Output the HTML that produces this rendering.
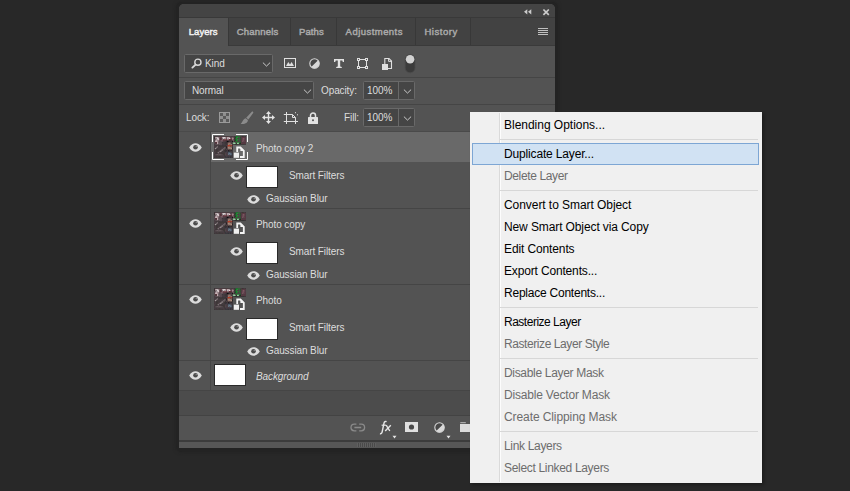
<!DOCTYPE html>
<html>
<head>
<meta charset="utf-8">
<title>Layers</title>
<style>
*{box-sizing:border-box;margin:0;padding:0}
html,body{width:850px;height:491px;overflow:hidden;background:#282828}
body{position:relative;font-family:"Liberation Sans",sans-serif;font-size:10px;color:#dddddd}
.abs{position:absolute}
#shadow{left:176px;top:2px;width:382px;height:450px;border-radius:6px;background:#232323;box-shadow:0 0 3px 1px #242424}
#panel{left:179px;top:4px;width:376px;height:444px;background:#535353;border-radius:5px 5px 0 0;overflow:hidden}
#titlebar{left:0;top:0;width:376px;height:13px;background:#444444}
#tabbar{left:0;top:13px;width:376px;height:29px;background:#424242;border-top:1px solid #393939;border-bottom:1px solid #3a3a3a}
.tab span{position:absolute;top:0;white-space:nowrap}
.tab{top:0;height:27px;line-height:28px;text-align:left;font-weight:normal;-webkit-text-stroke:0.45px currentColor;font-size:9.5px;color:#aaaaaa;border-right:1px solid #383838;letter-spacing:-0.2px}
.tab.active{background:#535353;color:#f2f2f2;height:28px}
.hline{left:179px;width:376px;height:1px;background:#454545}
.dd{background:#454545;border:1px solid #696969;border-radius:1.5px}
.t{white-space:nowrap;line-height:14px;height:14px;letter-spacing:-0.1px;margin-top:1px}
.mask{background:#fff;border:1px solid #2a2a2a}
#menu{left:470px;top:112px;width:292px;height:371px;box-shadow:2px 2px 3px rgba(0,0,0,0.28);background:#f0f0f0;color:#000;font-size:12px;letter-spacing:-0.1px}
#menu .gut{left:29px;top:1px;width:2px;height:369px;background:#dadada;border-right:1px solid #fdfdfd}
#menu .mi{left:34px;height:22px;line-height:22px;white-space:nowrap}
#menu .dis{color:#6d6d6d}
#menu .ms{left:30px;width:258px;height:1px;background:#d7d7d7}
#menu .hl{left:2px;top:31px;width:287px;height:22px;background:#d1e2f3;border:1px solid #7da6d4}
</style>
</head>
<body>
<div id="shadow" class="abs"></div>
<div id="panel" class="abs">
  <div id="titlebar" class="abs"></div>
  <div id="tabbar" class="abs">
    <div class="abs tab active" style="left:0;width:50px"><span style="left:9.8px;letter-spacing:0.03px">Layers</span></div>
    <div class="abs tab" style="left:50px;width:62px"><span style="left:7.8px;letter-spacing:0.2px">Channels</span></div>
    <div class="abs tab" style="left:112px;width:46px"><span style="left:8.1px;letter-spacing:0.08px">Paths</span></div>
    <div class="abs tab" style="left:158px;width:79px"><span style="left:8.6px;letter-spacing:0.46px">Adjustments</span></div>
    <div class="abs tab" style="left:237px;width:55px"><span style="left:8.4px;letter-spacing:0.55px">History</span></div>
  </div>
</div>

<svg class="abs" style="left:523px;top:8px" width="10" height="8" viewBox="0 0 10 8"><path d="M4.3 1.2 V6.4 L1 3.8 Z M8.3 1.2 V6.4 L5 3.8 Z" fill="#cccccc"/></svg>
<svg class="abs" style="left:542px;top:8px" width="8" height="8" viewBox="0 0 8 8"><path d="M1.4 1.5 L6.8 6.9 M6.8 1.5 L1.4 6.9" stroke="#cccccc" stroke-width="1.7"/></svg>
<svg class="abs" style="left:537px;top:27px" width="12" height="9" viewBox="0 0 12 9"><path d="M1 1.5 H11 M1 3.5 H11 M1 5.5 H11 M1 7.5 H11" stroke="#c0c0c0" stroke-width="1" shape-rendering="crispEdges"/></svg>

<div class="abs dd" style="left:184px;top:54px;width:89px;height:19px"></div>
<svg class="abs" style="left:191px;top:58px" width="12" height="11" viewBox="0 0 12 11"><circle cx="6.9" cy="4.2" r="3.1" fill="none" stroke="#d8d8d8" stroke-width="1.4"/><path d="M4.6 6.6 L1.4 9.6" stroke="#d8d8d8" stroke-width="1.9" stroke-linecap="round"/></svg>
<div class="abs t" style="left:205px;top:56px">Kind</div>
<svg class="abs" style="left:262px;top:61.5px" width="9" height="6" viewBox="0 0 9 6"><path d="M0.9 0.6 L4.5 4.1 L8.1 0.6" fill="none" stroke="#cacaca" stroke-width="1"/></svg>

<svg class="abs" style="left:284px;top:58px" width="12" height="10" viewBox="0 0 12 10"><rect x="0.5" y="0.5" width="11" height="9" fill="none" stroke="#e0e0e0" stroke-width="1"/><path d="M2 8 L4.3 4 L6 6.5 L7.6 4 L10 8 Z" fill="#e0e0e0"/></svg>
<svg class="abs" style="left:309px;top:57.5px" width="11" height="11" viewBox="0 0 11 11"><circle cx="5.5" cy="5.5" r="4.7" fill="#484848" stroke="#d8d8d8" stroke-width="1.1"/><path d="M9.1 2.2 A4.9 4.9 0 0 1 2.2 9.1 Z" fill="#d8d8d8"/></svg>
<svg class="abs" style="left:333px;top:58px" width="12" height="11" viewBox="0 0 12 11"><path d="M1 1 H11 V4 H9.8 L9.3 2.4 H7.2 V8.6 L8.8 9 V10 H3.2 V9 L4.8 8.6 V2.4 H2.7 L2.2 4 H1 Z" fill="#e2e2e2"/></svg>
<svg class="abs" style="left:357px;top:58px" width="12" height="12" viewBox="0 0 12 12"><rect x="1.5" y="1.5" width="8" height="8" fill="none" stroke="#e0e0e0" stroke-width="1"/><g fill="#535353" stroke="#e0e0e0" stroke-width="1"><rect x="0.5" y="0.5" width="2" height="2"/><rect x="8.5" y="0.5" width="2" height="2"/><rect x="0.5" y="8.5" width="2" height="2"/><rect x="8.5" y="8.5" width="2" height="2"/></g></svg>
<svg class="abs" style="left:381px;top:57px" width="12" height="14" viewBox="0 0 12 14"><path d="M3.8 7 V1.5 H8 L10.5 4 V11.5 H7" fill="none" stroke="#e0e0e0" stroke-width="1.1"/><path d="M7.6 1.5 V4.4 H10.5" fill="none" stroke="#e0e0e0" stroke-width="1"/><rect x="1" y="7" width="6" height="6" fill="#e0e0e0"/></svg>
<svg class="abs" style="left:404px;top:53px" width="12" height="21" viewBox="0 0 12 21"><rect x="1.2" y="1.4" width="9.8" height="18.4" rx="4.9" fill="#3b3b3b" stroke="#4b4b4b" stroke-width="0.8"/><circle cx="6.1" cy="6.2" r="4.3" fill="#d2d2d2"/></svg>

<div class="abs hline" style="top:77px"></div>
<div class="abs dd" style="left:184px;top:81px;width:130px;height:19px"></div>
<div class="abs t" style="left:192px;top:83px">Normal</div>
<svg class="abs" style="left:303px;top:88.5px" width="9" height="6" viewBox="0 0 9 6"><path d="M0.9 0.6 L4.5 4.1 L8.1 0.6" fill="none" stroke="#cacaca" stroke-width="1"/></svg>
<div class="abs t" style="left:321px;top:83px">Opacity:</div>
<div class="abs dd" style="left:363px;top:81px;width:52px;height:19px"></div>
<div class="abs" style="left:398px;top:82px;width:1px;height:17px;background:#686868"></div>
<div class="abs t" style="left:367px;top:83px">100%</div>
<svg class="abs" style="left:402.5px;top:88.5px" width="9" height="6" viewBox="0 0 9 6"><path d="M0.9 0.6 L4.5 4.1 L8.1 0.6" fill="none" stroke="#cacaca" stroke-width="1"/></svg>

<div class="abs hline" style="top:104px"></div>
<div class="abs t" style="left:186px;top:110px">Lock:</div>
<svg class="abs" style="left:219px;top:112px" width="11" height="11" viewBox="0 0 11 11"><rect x="0.5" y="0.5" width="10" height="10" fill="#8f8f8f" stroke="#9a9a9a"/><g fill="#5a5a5a"><rect x="1" y="1" width="3" height="3"/><rect x="7" y="1" width="3" height="3"/><rect x="4" y="4" width="3" height="3"/><rect x="1" y="7" width="3" height="3"/><rect x="7" y="7" width="3" height="3"/></g></svg>
<svg class="abs" style="left:240px;top:111px" width="14" height="14" viewBox="0 0 14 14"><path d="M12 0.6 C12.9 0.4 13.6 1.2 13.2 2 L8.4 8.6 L6.2 6.8 Z" fill="#8b8b8b"/><path d="M5.7 7.3 L7.9 9.1 C8 12 4.6 13.6 0.6 12.9 C2.8 11.6 2.2 8.6 5.7 7.3 Z" fill="#8b8b8b"/></svg>
<svg class="abs" style="left:262px;top:111px" width="13" height="13" viewBox="0 0 13 13"><path d="M6.5 0 L9 3 H7.2 V5.8 H10 V4 L13 6.5 L10 9 V7.2 H7.2 V10 H9 L6.5 13 L4 10 H5.8 V7.2 H3 V9 L0 6.5 L3 4 V5.8 H5.8 V3 H4 Z" fill="#e4e4e4"/></svg>
<svg class="abs" style="left:283px;top:111px" width="16" height="14" viewBox="0 0 16 14"><path d="M3.5 1 V13 M0.8 3.5 H9.5 L12.5 6.5 V13 M0.8 10.5 H15 M9.5 3.5 V6.5 H12.5" fill="none" stroke="#e0e0e0" stroke-width="1"/><rect x="12" y="1.2" width="1" height="1" fill="#e0e0e0"/><rect x="14" y="3.3" width="1" height="1" fill="#e0e0e0"/></svg>
<svg class="abs" style="left:308px;top:112px" width="10" height="12" viewBox="0 0 10 12"><path d="M2.5 5 V3.5 A2.5 2.5 0 0 1 7.5 3.5 V5" fill="none" stroke="#e2e2e2" stroke-width="1.5"/><rect x="0" y="5" width="10" height="7" rx="0.5" fill="#e2e2e2"/><circle cx="5" cy="8.3" r="1" fill="#535353"/></svg>
<div class="abs t" style="left:344px;top:110px">Fill:</div>
<div class="abs dd" style="left:363px;top:108px;width:52px;height:19px"></div>
<div class="abs" style="left:398px;top:109px;width:1px;height:17px;background:#686868"></div>
<div class="abs t" style="left:367px;top:110px">100%</div>
<svg class="abs" style="left:402.5px;top:115.5px" width="9" height="6" viewBox="0 0 9 6"><path d="M0.9 0.6 L4.5 4.1 L8.1 0.6" fill="none" stroke="#cacaca" stroke-width="1"/></svg>

<div class="abs hline" style="top:131px;background:#4a4a4a"></div>
<div class="abs" style="left:211px;top:132px;width:344px;height:30px;background:#696969"></div>
<div class="abs" style="left:179px;top:391px;width:376px;height:24px;background:#4c4c4c"></div>
<div class="abs" style="left:210px;top:132px;width:1px;height:259px;background:#464646"></div>
<div class="abs hline" style="top:208px"></div>
<div class="abs hline" style="top:284px"></div>
<div class="abs hline" style="top:360px"></div>
<div class="abs hline" style="top:390px"></div>
<svg class="abs" style="left:189.0px;top:143.0px" width="13" height="9" viewBox="0 0 13 9"><path d="M0.2 4.5 C2 1.4 4.2 0.3 6.5 0.3 C8.8 0.3 11 1.4 12.8 4.5 C11 7.6 8.8 8.7 6.5 8.7 C4.2 8.7 2 7.6 0.2 4.5 Z" fill="#dcdcdc"/><circle cx="6.5" cy="4.3" r="2.3" fill="#4a4a4a"/><circle cx="7.3" cy="3.5" r="0.8" fill="#858585"/></svg>
<svg class="abs" style="left:214px;top:136px" width="32" height="22" viewBox="0 0 32 22">
<defs><filter id="b0" x="-10%" y="-10%" width="120%" height="120%"><feGaussianBlur in="SourceGraphic" stdDeviation="0.7" result="bl"/><feTurbulence type="fractalNoise" baseFrequency="0.42" numOctaves="2" seed="7" result="n"/><feColorMatrix in="n" type="matrix" values="0 0 0 0 0.07  0 0 0 0 0.05  0 0 0 0 0.06  2.4 0 0 0 -0.75" result="na"/><feComposite in="na" in2="bl" operator="in" result="dk"/><feMerge><feMergeNode in="bl"/><feMergeNode in="dk"/></feMerge></filter><clipPath id="c0"><rect width="32" height="22"/></clipPath><clipPath id="d0"><path d="M0 0 H32 V8.4 H18.6 V22 H0 Z"/></clipPath></defs>
<g clip-path="url(#d0)">
<rect width="32" height="22" fill="#2a2325"/>
<g filter="url(#b0)" clip-path="url(#c0)">
<rect x="0" y="0" width="32" height="22" fill="#2e292a"/>
<rect x="1" y="0.6" width="19" height="5" fill="#7c5c63"/>
<rect x="1.5" y="1" width="3.6" height="3" fill="#f0e2e5"/>
<rect x="6" y="1.6" width="1.6" height="2.4" fill="#5a2028"/>
<rect x="8" y="1" width="3.8" height="2.4" fill="#f2e6e8"/>
<rect x="9" y="3.4" width="4" height="2" fill="#7a3038"/>
<rect x="13" y="1" width="3.2" height="2.4" fill="#ecd6da"/>
<rect x="15" y="3" width="3" height="2" fill="#6a2830"/>
<rect x="18" y="1" width="1.6" height="3.4" fill="#b48c95"/>
<rect x="0.6" y="4" width="4" height="4.4" fill="#c9b2b7"/>
<rect x="1" y="6" width="2" height="2" fill="#5a3038"/>
<rect x="5" y="5" width="4" height="4" fill="#6b5a60"/>
<rect x="0" y="9" width="12" height="13" fill="#3e3839"/>
<rect x="8" y="6" width="4" height="4" fill="#3b383a"/>
<path d="M3.4 16.6 L11.6 10.6 L12.4 12 L4.4 17.8 Z" fill="#9a9092"/>
<path d="M0.6 12.6 L3.6 10 L4.2 11 L1.2 13.6 Z" fill="#a89ea0"/>
<rect x="1.4" y="18" width="7" height="1.4" fill="#6e6466"/>
<rect x="11.6" y="4.6" width="7.4" height="10" fill="#181516"/>
<rect x="13.6" y="6.4" width="4.4" height="2.6" fill="#b48c7c"/>
<rect x="13" y="9" width="5.4" height="1.5" fill="#c03c22"/>
<rect x="13.4" y="10.5" width="4.6" height="3" fill="#b89484"/>
<rect x="11" y="15" width="8" height="7" fill="#2a3038"/>
<rect x="14" y="16.4" width="3.6" height="3" fill="#66788a"/>
<rect x="11" y="16.6" width="2.6" height="3" fill="#5c4a4e"/>
<rect x="20" y="0" width="12" height="8.4" fill="#1b3320"/>
<rect x="21.5" y="0" width="5" height="7" fill="#117a29"/>
<rect x="22.5" y="1" width="2.2" height="3.6" fill="#1a9a38"/>
<rect x="18.6" y="6.4" width="3" height="1.6" fill="#a6e6b0"/>
<rect x="23" y="6.6" width="1.8" height="1.5" fill="#9fe0aa"/>
<rect x="27" y="0.5" width="5" height="7.5" fill="#5b3843"/>
<rect x="28" y="2" width="2.5" height="4" fill="#7f5560"/>
</g>
</g>
<path d="M23.2 16 V11.5 H26.4 L29.8 14.9 V21 H26" fill="none" stroke="#f4f4f4" stroke-width="1.8"/>
<path d="M26.4 11 V14.9 H30.3 Z" fill="#f4f4f4"/>
<rect x="19.8" y="16.6" width="5.2" height="5.2" fill="#efefef"/>
</svg>
<div class="abs t" style="left:256px;top:141px">Photo copy 2</div>
<svg class="abs" style="left:230.0px;top:171.0px" width="13" height="9" viewBox="0 0 13 9"><path d="M0.2 4.5 C2 1.4 4.2 0.3 6.5 0.3 C8.8 0.3 11 1.4 12.8 4.5 C11 7.6 8.8 8.7 6.5 8.7 C4.2 8.7 2 7.6 0.2 4.5 Z" fill="#dcdcdc"/><circle cx="6.5" cy="4.3" r="2.3" fill="#4a4a4a"/><circle cx="7.3" cy="3.5" r="0.8" fill="#858585"/></svg>
<div class="abs mask" style="left:246px;top:166px;width:32px;height:22px"></div>
<div class="abs t" style="left:289px;top:168px">Smart Filters</div>
<svg class="abs" style="left:247.0px;top:195.0px" width="13" height="9" viewBox="0 0 13 9"><path d="M0.2 4.5 C2 1.4 4.2 0.3 6.5 0.3 C8.8 0.3 11 1.4 12.8 4.5 C11 7.6 8.8 8.7 6.5 8.7 C4.2 8.7 2 7.6 0.2 4.5 Z" fill="#dcdcdc"/><circle cx="6.5" cy="4.3" r="2.3" fill="#4a4a4a"/><circle cx="7.3" cy="3.5" r="0.8" fill="#858585"/></svg>
<div class="abs t" style="left:266px;top:191px">Gaussian Blur</div>
<svg class="abs" style="left:189.0px;top:219.0px" width="13" height="9" viewBox="0 0 13 9"><path d="M0.2 4.5 C2 1.4 4.2 0.3 6.5 0.3 C8.8 0.3 11 1.4 12.8 4.5 C11 7.6 8.8 8.7 6.5 8.7 C4.2 8.7 2 7.6 0.2 4.5 Z" fill="#dcdcdc"/><circle cx="6.5" cy="4.3" r="2.3" fill="#4a4a4a"/><circle cx="7.3" cy="3.5" r="0.8" fill="#858585"/></svg>
<svg class="abs" style="left:214px;top:212px" width="32" height="22" viewBox="0 0 32 22">
<defs><filter id="b1" x="-10%" y="-10%" width="120%" height="120%"><feGaussianBlur in="SourceGraphic" stdDeviation="0.7" result="bl"/><feTurbulence type="fractalNoise" baseFrequency="0.42" numOctaves="2" seed="7" result="n"/><feColorMatrix in="n" type="matrix" values="0 0 0 0 0.07  0 0 0 0 0.05  0 0 0 0 0.06  2.4 0 0 0 -0.75" result="na"/><feComposite in="na" in2="bl" operator="in" result="dk"/><feMerge><feMergeNode in="bl"/><feMergeNode in="dk"/></feMerge></filter><clipPath id="c1"><rect width="32" height="22"/></clipPath><clipPath id="d1"><path d="M0 0 H32 V8.4 H18.6 V22 H0 Z"/></clipPath></defs>
<g clip-path="url(#d1)">
<rect width="32" height="22" fill="#2a2325"/>
<g filter="url(#b1)" clip-path="url(#c1)">
<rect x="0" y="0" width="32" height="22" fill="#2e292a"/>
<rect x="1" y="0.6" width="19" height="5" fill="#7c5c63"/>
<rect x="1.5" y="1" width="3.6" height="3" fill="#f0e2e5"/>
<rect x="6" y="1.6" width="1.6" height="2.4" fill="#5a2028"/>
<rect x="8" y="1" width="3.8" height="2.4" fill="#f2e6e8"/>
<rect x="9" y="3.4" width="4" height="2" fill="#7a3038"/>
<rect x="13" y="1" width="3.2" height="2.4" fill="#ecd6da"/>
<rect x="15" y="3" width="3" height="2" fill="#6a2830"/>
<rect x="18" y="1" width="1.6" height="3.4" fill="#b48c95"/>
<rect x="0.6" y="4" width="4" height="4.4" fill="#c9b2b7"/>
<rect x="1" y="6" width="2" height="2" fill="#5a3038"/>
<rect x="5" y="5" width="4" height="4" fill="#6b5a60"/>
<rect x="0" y="9" width="12" height="13" fill="#3e3839"/>
<rect x="8" y="6" width="4" height="4" fill="#3b383a"/>
<path d="M3.4 16.6 L11.6 10.6 L12.4 12 L4.4 17.8 Z" fill="#9a9092"/>
<path d="M0.6 12.6 L3.6 10 L4.2 11 L1.2 13.6 Z" fill="#a89ea0"/>
<rect x="1.4" y="18" width="7" height="1.4" fill="#6e6466"/>
<rect x="11.6" y="4.6" width="7.4" height="10" fill="#181516"/>
<rect x="13.6" y="6.4" width="4.4" height="2.6" fill="#b48c7c"/>
<rect x="13" y="9" width="5.4" height="1.5" fill="#c03c22"/>
<rect x="13.4" y="10.5" width="4.6" height="3" fill="#b89484"/>
<rect x="11" y="15" width="8" height="7" fill="#2a3038"/>
<rect x="14" y="16.4" width="3.6" height="3" fill="#66788a"/>
<rect x="11" y="16.6" width="2.6" height="3" fill="#5c4a4e"/>
<rect x="20" y="0" width="12" height="8.4" fill="#1b3320"/>
<rect x="21.5" y="0" width="5" height="7" fill="#117a29"/>
<rect x="22.5" y="1" width="2.2" height="3.6" fill="#1a9a38"/>
<rect x="18.6" y="6.4" width="3" height="1.6" fill="#a6e6b0"/>
<rect x="23" y="6.6" width="1.8" height="1.5" fill="#9fe0aa"/>
<rect x="27" y="0.5" width="5" height="7.5" fill="#5b3843"/>
<rect x="28" y="2" width="2.5" height="4" fill="#7f5560"/>
</g>
</g>
<path d="M23.2 16 V11.5 H26.4 L29.8 14.9 V21 H26" fill="none" stroke="#f4f4f4" stroke-width="1.8"/>
<path d="M26.4 11 V14.9 H30.3 Z" fill="#f4f4f4"/>
<rect x="19.8" y="16.6" width="5.2" height="5.2" fill="#efefef"/>
</svg>
<div class="abs t" style="left:256px;top:217px">Photo copy</div>
<svg class="abs" style="left:230.0px;top:247.0px" width="13" height="9" viewBox="0 0 13 9"><path d="M0.2 4.5 C2 1.4 4.2 0.3 6.5 0.3 C8.8 0.3 11 1.4 12.8 4.5 C11 7.6 8.8 8.7 6.5 8.7 C4.2 8.7 2 7.6 0.2 4.5 Z" fill="#dcdcdc"/><circle cx="6.5" cy="4.3" r="2.3" fill="#4a4a4a"/><circle cx="7.3" cy="3.5" r="0.8" fill="#858585"/></svg>
<div class="abs mask" style="left:246px;top:242px;width:32px;height:22px"></div>
<div class="abs t" style="left:289px;top:244px">Smart Filters</div>
<svg class="abs" style="left:247.0px;top:271.0px" width="13" height="9" viewBox="0 0 13 9"><path d="M0.2 4.5 C2 1.4 4.2 0.3 6.5 0.3 C8.8 0.3 11 1.4 12.8 4.5 C11 7.6 8.8 8.7 6.5 8.7 C4.2 8.7 2 7.6 0.2 4.5 Z" fill="#dcdcdc"/><circle cx="6.5" cy="4.3" r="2.3" fill="#4a4a4a"/><circle cx="7.3" cy="3.5" r="0.8" fill="#858585"/></svg>
<div class="abs t" style="left:266px;top:267px">Gaussian Blur</div>
<svg class="abs" style="left:189.0px;top:295.0px" width="13" height="9" viewBox="0 0 13 9"><path d="M0.2 4.5 C2 1.4 4.2 0.3 6.5 0.3 C8.8 0.3 11 1.4 12.8 4.5 C11 7.6 8.8 8.7 6.5 8.7 C4.2 8.7 2 7.6 0.2 4.5 Z" fill="#dcdcdc"/><circle cx="6.5" cy="4.3" r="2.3" fill="#4a4a4a"/><circle cx="7.3" cy="3.5" r="0.8" fill="#858585"/></svg>
<svg class="abs" style="left:214px;top:288px" width="32" height="22" viewBox="0 0 32 22">
<defs><filter id="b2" x="-10%" y="-10%" width="120%" height="120%"><feGaussianBlur in="SourceGraphic" stdDeviation="0.7" result="bl"/><feTurbulence type="fractalNoise" baseFrequency="0.42" numOctaves="2" seed="7" result="n"/><feColorMatrix in="n" type="matrix" values="0 0 0 0 0.07  0 0 0 0 0.05  0 0 0 0 0.06  2.4 0 0 0 -0.75" result="na"/><feComposite in="na" in2="bl" operator="in" result="dk"/><feMerge><feMergeNode in="bl"/><feMergeNode in="dk"/></feMerge></filter><clipPath id="c2"><rect width="32" height="22"/></clipPath><clipPath id="d2"><path d="M0 0 H32 V8.4 H18.6 V22 H0 Z"/></clipPath></defs>
<g clip-path="url(#d2)">
<rect width="32" height="22" fill="#2a2325"/>
<g filter="url(#b2)" clip-path="url(#c2)">
<rect x="0" y="0" width="32" height="22" fill="#2e292a"/>
<rect x="1" y="0.6" width="19" height="5" fill="#7c5c63"/>
<rect x="1.5" y="1" width="3.6" height="3" fill="#f0e2e5"/>
<rect x="6" y="1.6" width="1.6" height="2.4" fill="#5a2028"/>
<rect x="8" y="1" width="3.8" height="2.4" fill="#f2e6e8"/>
<rect x="9" y="3.4" width="4" height="2" fill="#7a3038"/>
<rect x="13" y="1" width="3.2" height="2.4" fill="#ecd6da"/>
<rect x="15" y="3" width="3" height="2" fill="#6a2830"/>
<rect x="18" y="1" width="1.6" height="3.4" fill="#b48c95"/>
<rect x="0.6" y="4" width="4" height="4.4" fill="#c9b2b7"/>
<rect x="1" y="6" width="2" height="2" fill="#5a3038"/>
<rect x="5" y="5" width="4" height="4" fill="#6b5a60"/>
<rect x="0" y="9" width="12" height="13" fill="#3e3839"/>
<rect x="8" y="6" width="4" height="4" fill="#3b383a"/>
<path d="M3.4 16.6 L11.6 10.6 L12.4 12 L4.4 17.8 Z" fill="#9a9092"/>
<path d="M0.6 12.6 L3.6 10 L4.2 11 L1.2 13.6 Z" fill="#a89ea0"/>
<rect x="1.4" y="18" width="7" height="1.4" fill="#6e6466"/>
<rect x="11.6" y="4.6" width="7.4" height="10" fill="#181516"/>
<rect x="13.6" y="6.4" width="4.4" height="2.6" fill="#b48c7c"/>
<rect x="13" y="9" width="5.4" height="1.5" fill="#c03c22"/>
<rect x="13.4" y="10.5" width="4.6" height="3" fill="#b89484"/>
<rect x="11" y="15" width="8" height="7" fill="#2a3038"/>
<rect x="14" y="16.4" width="3.6" height="3" fill="#66788a"/>
<rect x="11" y="16.6" width="2.6" height="3" fill="#5c4a4e"/>
<rect x="20" y="0" width="12" height="8.4" fill="#1b3320"/>
<rect x="21.5" y="0" width="5" height="7" fill="#117a29"/>
<rect x="22.5" y="1" width="2.2" height="3.6" fill="#1a9a38"/>
<rect x="18.6" y="6.4" width="3" height="1.6" fill="#a6e6b0"/>
<rect x="23" y="6.6" width="1.8" height="1.5" fill="#9fe0aa"/>
<rect x="27" y="0.5" width="5" height="7.5" fill="#5b3843"/>
<rect x="28" y="2" width="2.5" height="4" fill="#7f5560"/>
</g>
</g>
<path d="M23.2 16 V11.5 H26.4 L29.8 14.9 V21 H26" fill="none" stroke="#f4f4f4" stroke-width="1.8"/>
<path d="M26.4 11 V14.9 H30.3 Z" fill="#f4f4f4"/>
<rect x="19.8" y="16.6" width="5.2" height="5.2" fill="#efefef"/>
</svg>
<div class="abs t" style="left:256px;top:293px">Photo</div>
<svg class="abs" style="left:230.0px;top:323.0px" width="13" height="9" viewBox="0 0 13 9"><path d="M0.2 4.5 C2 1.4 4.2 0.3 6.5 0.3 C8.8 0.3 11 1.4 12.8 4.5 C11 7.6 8.8 8.7 6.5 8.7 C4.2 8.7 2 7.6 0.2 4.5 Z" fill="#dcdcdc"/><circle cx="6.5" cy="4.3" r="2.3" fill="#4a4a4a"/><circle cx="7.3" cy="3.5" r="0.8" fill="#858585"/></svg>
<div class="abs mask" style="left:246px;top:318px;width:32px;height:22px"></div>
<div class="abs t" style="left:289px;top:320px">Smart Filters</div>
<svg class="abs" style="left:247.0px;top:347.0px" width="13" height="9" viewBox="0 0 13 9"><path d="M0.2 4.5 C2 1.4 4.2 0.3 6.5 0.3 C8.8 0.3 11 1.4 12.8 4.5 C11 7.6 8.8 8.7 6.5 8.7 C4.2 8.7 2 7.6 0.2 4.5 Z" fill="#dcdcdc"/><circle cx="6.5" cy="4.3" r="2.3" fill="#4a4a4a"/><circle cx="7.3" cy="3.5" r="0.8" fill="#858585"/></svg>
<div class="abs t" style="left:266px;top:343px">Gaussian Blur</div>
<svg class="abs" style="left:212px;top:134px" width="36" height="26" viewBox="0 0 36 26"><path d="M0.5 8 V0.5 H12 M24 0.5 H35.5 V8 M35.5 18 V25.5 H24 M12 25.5 H0.5 V18" fill="none" stroke="#ffffff" stroke-width="1"/></svg>
<svg class="abs" style="left:189.0px;top:371.0px" width="13" height="9" viewBox="0 0 13 9"><path d="M0.2 4.5 C2 1.4 4.2 0.3 6.5 0.3 C8.8 0.3 11 1.4 12.8 4.5 C11 7.6 8.8 8.7 6.5 8.7 C4.2 8.7 2 7.6 0.2 4.5 Z" fill="#dcdcdc"/><circle cx="6.5" cy="4.3" r="2.3" fill="#4a4a4a"/><circle cx="7.3" cy="3.5" r="0.8" fill="#858585"/></svg>
<div class="abs mask" style="left:214px;top:364px;width:32px;height:22px"></div>
<div class="abs t" style="left:256px;top:369px;font-style:italic">Background</div>
<div class="abs hline" style="top:415px;background:#434343"></div>
<div class="abs hline" style="top:440px;height:2px;background:#3c3c3c"></div>
<div class="abs" style="left:179px;top:442px;width:376px;height:6px;background:#575757"></div>
<div class="abs" style="left:357px;top:443px;width:19px;height:4px;background:repeating-linear-gradient(90deg,#606060 0,#606060 1px,#4a4a4a 1px,#4a4a4a 2px)"></div>
<svg class="abs" style="left:350px;top:423px" width="16" height="9" viewBox="0 0 16 9"><path d="M6.4 1.2 H4.3 A3.3 3.3 0 0 0 4.3 7.8 H6.4 M9.2 1.2 H11.3 A3.3 3.3 0 0 1 11.3 7.8 H9.2 M4.4 4.5 H11.2" fill="none" stroke="#8a8a8a" stroke-width="1.3"/></svg>
<svg class="abs" style="left:379px;top:420px" width="14" height="15" viewBox="0 0 14 15"><path d="M7.6 1.7 C6.2 1.1 5.3 1.8 5 3.2 L3.1 12.2 C2.8 13.5 2 13.9 1 13.5" fill="none" stroke="#e6e6e6" stroke-width="1.45"/><path d="M2.6 5.2 H7" stroke="#e6e6e6" stroke-width="1.2"/><path d="M7.2 5.2 L10.8 11 M11.8 5.2 L6.2 11" stroke="#e6e6e6" stroke-width="1.4"/></svg>
<svg class="abs" style="left:392px;top:435px" width="5" height="4" viewBox="0 0 5 4"><path d="M0.5 0.8 H4.5 L2.5 3.6 Z" fill="#e6e6e6"/></svg>
<svg class="abs" style="left:405px;top:422px" width="13" height="10" viewBox="0 0 13 10"><rect width="13" height="10" fill="#e0e0e0"/><circle cx="6.5" cy="5" r="2.6" fill="#484848"/></svg>
<svg class="abs" style="left:434px;top:421.7px" width="11" height="11" viewBox="0 0 11 11"><circle cx="5.5" cy="5.5" r="4.7" fill="#484848" stroke="#d8d8d8" stroke-width="1.1"/><path d="M9.1 2.2 A4.9 4.9 0 0 1 2.2 9.1 Z" fill="#d8d8d8"/></svg>
<svg class="abs" style="left:446px;top:435px" width="5" height="4" viewBox="0 0 5 4"><path d="M0.5 0.8 H4.5 L2.5 3.6 Z" fill="#e6e6e6"/></svg>
<svg class="abs" style="left:460px;top:421px" width="14" height="11" viewBox="0 0 14 11"><path d="M0.3 1.7 H5.8" stroke="#c8c8c8" stroke-width="0.9"/><rect x="0" y="3" width="14" height="8" fill="#dcdcdc"/></svg>

<div id="menu" class="abs">
  <div class="abs gut"></div>
  <div class="abs hl"></div>

  <div class="abs mi" style="top:2px;letter-spacing:-0.02px">Blending Options...</div>
  <div class="abs ms" style="top:27px"></div>
  <div class="abs mi" style="top:31px;letter-spacing:-0.16px">Duplicate Layer...</div>
  <div class="abs mi dis" style="top:53px;letter-spacing:-0.37px">Delete Layer</div>
  <div class="abs ms" style="top:78px"></div>
  <div class="abs mi" style="top:82px;letter-spacing:-0.06px">Convert to Smart Object</div>
  <div class="abs mi" style="top:104px;letter-spacing:-0.11px">New Smart Object via Copy</div>
  <div class="abs mi" style="top:126px;letter-spacing:-0.12px">Edit Contents</div>
  <div class="abs mi" style="top:148px;letter-spacing:-0.16px">Export Contents...</div>
  <div class="abs mi" style="top:170px;letter-spacing:-0.23px">Replace Contents...</div>
  <div class="abs ms" style="top:195px"></div>
  <div class="abs mi" style="top:199px;letter-spacing:-0.49px">Rasterize Layer</div>
  <div class="abs mi dis" style="top:221px;letter-spacing:-0.42px">Rasterize Layer Style</div>
  <div class="abs ms" style="top:246px"></div>
  <div class="abs mi dis" style="top:250px;letter-spacing:-0.32px">Disable Layer Mask</div>
  <div class="abs mi dis" style="top:272px;letter-spacing:-0.19px">Disable Vector Mask</div>
  <div class="abs mi dis" style="top:294px;letter-spacing:-0.09px">Create Clipping Mask</div>
  <div class="abs ms" style="top:319px"></div>
  <div class="abs mi dis" style="top:323px;letter-spacing:-0.33px">Link Layers</div>
  <div class="abs mi dis" style="top:345px;letter-spacing:-0.32px">Select Linked Layers</div>
</div>
</body>
</html>
